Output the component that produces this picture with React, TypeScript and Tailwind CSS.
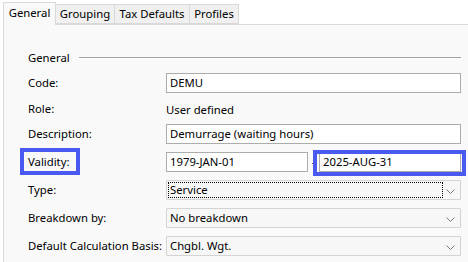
import React from "react";

const font = { fontFamily: '"Noto Sans", "Open Sans", sans-serif' };

function Chevron() {
  return (
    <svg width="9" height="5" viewBox="0 0 9 5" className="absolute right-[5px] top-[8px]">
      <path d="M0.5 0.5 L4.5 4.5 L8.5 0.5" fill="none" stroke="#7a7a7a" strokeWidth="1" />
    </svg>
  );
}

function Row({ label, children, h = "h-[20px]" }: { label: string; children: React.ReactNode; h?: string }) {
  return (
    <div className={`flex items-center ${h}`}>
      <div className="w-[138px] shrink-0 whitespace-nowrap">{label}</div>
      <div className="flex-1 flex items-center h-full">{children}</div>
    </div>
  );
}

function Input({ value, className = "" }: { value: string; className?: string }) {
  return (
    <div className={`h-[20px] bg-white border border-[#acacac] flex items-center pl-[3px] whitespace-nowrap ${className}`}>
      {value}
    </div>
  );
}

function Select({ value, focused = false }: { value: string; focused?: boolean }) {
  return (
    <div className="relative h-[20px] w-full bg-[#f7f7f7] border border-[#d4d4d4] rounded-[1px] flex items-center">
      {focused ? (
        <div className="absolute left-[1px] top-[1px] bottom-[1px] right-[17px] border border-dotted border-black" />
      ) : null}
      <span className="pl-[3px] whitespace-nowrap">{value}</span>
      <Chevron />
    </div>
  );
}

export default function App() {
  return (
    <div className="relative w-[468px] h-[262px] bg-white overflow-hidden text-[11.3px] text-black leading-none" style={font}>
      <div className="flex items-end h-[24px] pl-[3px]">
        <div className="relative z-10 h-[23px] w-[53px] bg-[#f9f9f9] border border-b-0 border-[#d9d9d9] flex items-center justify-center mb-[-1px] pb-[2px] whitespace-nowrap">
          General
        </div>
        <div className="h-[20px] w-[59px] bg-[#f0f0f0] border border-l-0 border-[#d9d9d9] flex items-center justify-center whitespace-nowrap">
          Grouping
        </div>
        <div className="h-[20px] w-[75px] bg-[#f0f0f0] border border-l-0 border-[#d9d9d9] flex items-center justify-center whitespace-nowrap">
          Tax Defaults
        </div>
        <div className="h-[20px] w-[49px] bg-[#f0f0f0] border border-l-0 border-[#d9d9d9] flex items-center justify-center whitespace-nowrap">
          Profiles
        </div>
      </div>
      <div className="ml-[3px] h-[238px] bg-[#f9f9f9] border-l border-t border-[#d9d9d9] pl-[23px] pr-[7px]">
        <div className="flex items-center h-[14px] mt-[26px]">
          <span className="pl-[1px]">General</span>
          <div className="flex-1 ml-[9px] h-[2px] border-t border-[#a0a0a0] border-b border-b-white" />
        </div>
        <div className="mt-[8px] flex flex-col pl-[1px]">
          <Row label="Code:">
            <Input value="DEMU" className="w-full" />
          </Row>
          <Row label="Role:" h="h-[31px]">
            <span className="pt-[2px]">User defined</span>
          </Row>
          <Row label="Description:">
            <Input value="Demurrage (waiting hours)" className="w-full" />
          </Row>
          <div className="h-[8px]" />
          <Row label="Validity:">
            <Input value="1979-JAN-01" className="w-[142px]" />
            <span className="w-[11px] text-center">-</span>
            <Input value="2025-AUG-31" className="flex-1" />
          </Row>
          <div className="h-[8px]" />
          <Row label="Type:">
            <Select value="Service" focused />
          </Row>
          <div className="h-[8px]" />
          <Row label="Breakdown by:">
            <Select value="No breakdown" />
          </Row>
          <div className="h-[8px]" />
          <Row label="Default Calculation Basis:">
            <Select value="Chgbl. Wgt." />
          </Row>
        </div>
      </div>
      <div className="absolute left-[20px] top-[148px] w-[60px] h-[27px] border-[4px] border-[#4a5af0]" />
      <div className="absolute left-[313px] top-[150px] w-[153px] h-[26px] border-[4px] border-[#4a5af0]" />
    </div>
  );
}
